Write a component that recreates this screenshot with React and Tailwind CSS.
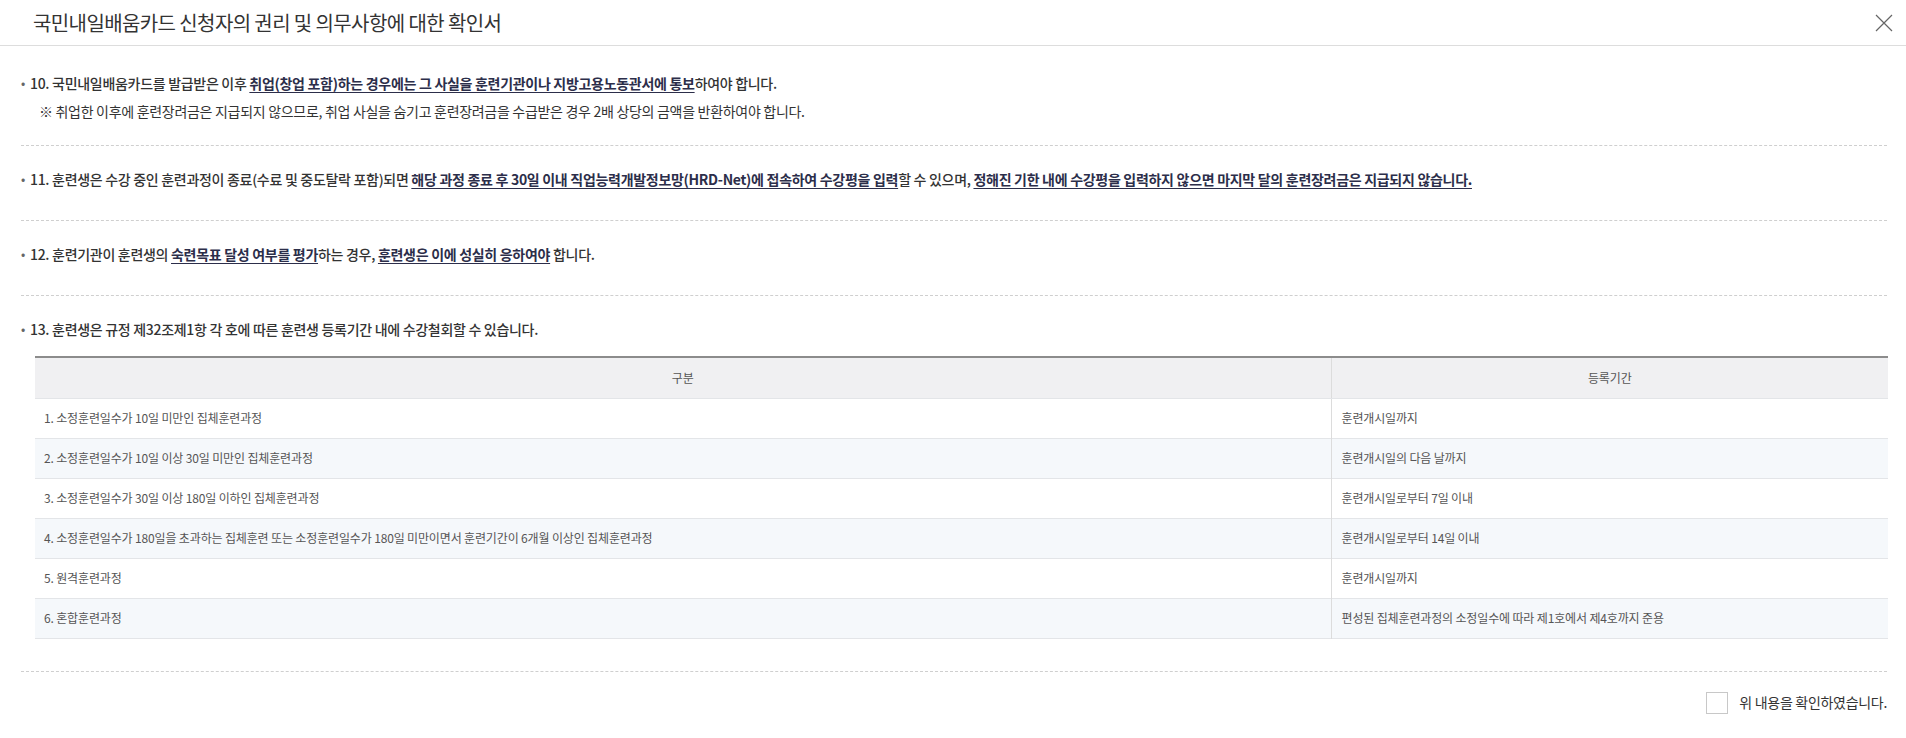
import React from "react";

const U = ({ children }) => (
  <span className="font-bold text-[#2c2e4a] underline underline-offset-[3px] decoration-1">{children}</span>
);

const Dash = () => <div className="border-t border-dashed border-[#cfcfcf]" />;

const rows = [
  ["1. 소정훈련일수가 10일 미만인 집체훈련과정", "훈련개시일까지"],
  ["2. 소정훈련일수가 10일 이상 30일 미만인 집체훈련과정", "훈련개시일의 다음 날까지"],
  ["3. 소정훈련일수가 30일 이상 180일 이하인 집체훈련과정", "훈련개시일로부터 7일 이내"],
  ["4. 소정훈련일수가 180일을 초과하는 집체훈련 또는 소정훈련일수가 180일 미만이면서 훈련기간이 6개월 이상인 집체훈련과정", "훈련개시일로부터 14일 이내"],
  ["5. 원격훈련과정", "훈련개시일까지"],
  ["6. 혼합훈련과정", "편성된 집체훈련과정의 소정일수에 따라 제1호에서 제4호까지 준용"],
];

function Item({ children }) {
  return (
    <div className="flex items-center h-5 text-[14px] font-medium text-[#333] tracking-[-0.3px]">
      <span className="w-[9px] text-[#666] text-[12px]">•</span>
      <span>{children}</span>
    </div>
  );
}

export default function App() {
  return (
    <div className="w-[1906px] h-[738px] bg-white font-['Noto_Sans_CJK_KR',sans-serif] overflow-hidden">
      <div className="h-[46px] flex items-center justify-between border-b border-[#dddddd] pl-[33px] pr-[13px]">
        <h1 className="text-[20px] text-[#333] tracking-[-0.6px] leading-none">
          국민내일배움카드 신청자의 권리 및 의무사항에 대한 확인서
        </h1>
        <svg width="18" height="18" viewBox="0 0 18 18" className="text-[#666]">
          <path d="M1 1 L17 17 M17 1 L1 17" stroke="currentColor" strokeWidth="1.2" fill="none" />
        </svg>
      </div>

      <div className="pl-[21px] pr-[19px]">
        <div className="pt-[27px] pb-[24px]">
          <Item>
            10. 국민내일배움카드를 발급받은 이후{" "}
            <U>취업(창업 포함)하는 경우에는 그 사실을 훈련기관이나 지방고용노동관서에 통보</U>하여야 합니다.
          </Item>
          <div className="mt-2 h-5 flex items-center pl-[18px] text-[14px] text-[#333] tracking-[-0.3px]">
            ※ 취업한 이후에 훈련장려금은 지급되지 않으므로, 취업 사실을 숨기고 훈련장려금을 수급받은 경우 2배 상당의 금액을 반환하여야 합니다.
          </div>
        </div>
        <Dash />
        <div className="pt-[23px] pb-[31px]">
          <Item>
            11. 훈련생은 수강 중인 훈련과정이 종료(수료 및 중도탈락 포함)되면{" "}
            <U>해당 과정 종료 후 30일 이내 직업능력개발정보망(HRD-Net)에 접속하여 수강평을 입력</U>할 수 있으며,{" "}
            <U>정해진 기한 내에 수강평을 입력하지 않으면 마지막 달의 훈련장려금은 지급되지 않습니다.</U>
          </Item>
        </div>
        <Dash />
        <div className="pt-[23px] pb-[31px]">
          <Item>
            12. 훈련기관이 훈련생의 <U>숙련목표 달성 여부를 평가</U>하는 경우, <U>훈련생은 이에 성실히 응하여야</U> 합니다.
          </Item>
        </div>
        <Dash />
        <div className="pt-[23px] pb-[32px]">
          <Item>13. 훈련생은 규정 제32조제1항 각 호에 따른 훈련생 등록기간 내에 수강철회할 수 있습니다.</Item>
          <table className="mt-[17px] ml-[14px] w-[1853px] border-collapse text-[12px] text-[#555] tracking-[-0.15px]">
            <thead>
              <tr className="bg-[#f0f0f2] h-[41px] border-t-2 border-[#8c8c8c]">
                <th className="font-normal border-b border-[#e3e5e8] border-r border-r-[#dcdcdc] w-[1296px]">구분</th>
                <th className="font-normal border-b border-[#e3e5e8]">등록기간</th>
              </tr>
            </thead>
            <tbody>
              {rows.map(([a, b], i) => (
                <tr key={i} className={`h-[40px] border-b border-[#e3e5e8] ${i % 2 ? "bg-[#f5f8fb]" : "bg-white"}`}>
                  <td className="pl-[9px] border-r border-[#dcdcdc]">{a}</td>
                  <td className="pl-[10px]">{b}</td>
                </tr>
              ))}
            </tbody>
          </table>
        </div>
        <Dash />
        <div className="pt-[20px] flex items-center justify-end gap-[11px]">
          <span className="w-[22px] h-[22px] border border-[#c8c8c8] bg-white" />
          <span className="text-[14px] text-[#333] tracking-[-0.3px]">위 내용을 확인하였습니다.</span>
        </div>
      </div>
    </div>
  );
}
